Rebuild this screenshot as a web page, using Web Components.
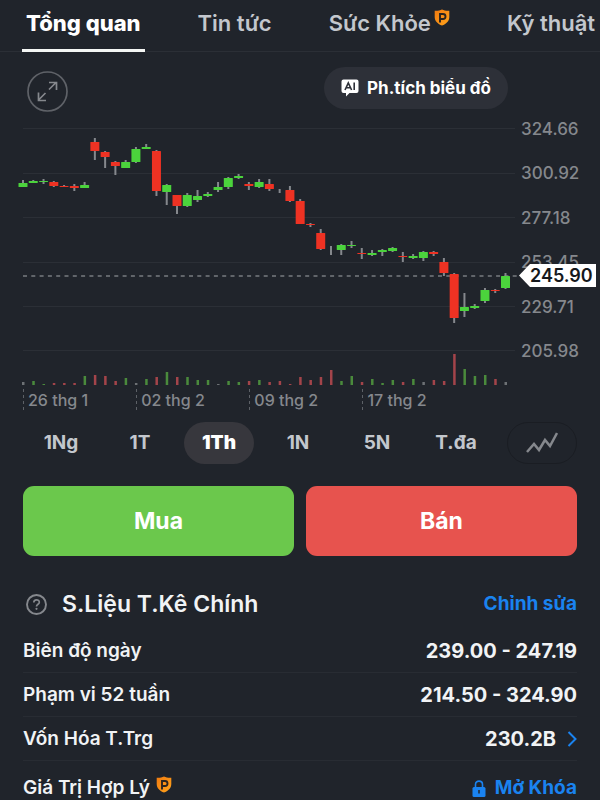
<!DOCTYPE html>
<html lang="vi">
<head>
<meta charset="utf-8">
<meta name="viewport" content="width=device-width, initial-scale=1">
<title>Tổng quan</title>
<style>
    :root {
        --bg: #20242b;
        --line: #2b2f36;
        --muted: #85888d;
        --soft: #c3c7cd;
        --text: #f1f3f5;
        --blue: #1a83f0;
        --up: #4bd33c;
        --down: #ee3223;
        --gutter: 23px;
    }
    body {
        margin: 0;
        background: var(--bg);
        color: var(--text);
        font-family: Inter, "Liberation Sans", sans-serif;
        overflow-x: hidden;
    }
</style>
</head>
<body>
<stock-tabs>
    <stock-tab active>Tổng quan</stock-tab>
    <stock-tab>Tin tức</stock-tab>
    <stock-tab>Sức Khỏe<pro-badge></pro-badge></stock-tab>
    <stock-tab>Kỹ thuật</stock-tab>
</stock-tabs>
<main>
    <chart-toolbar>Ph.tích biểu đồ</chart-toolbar>
    <price-chart></price-chart>
    <range-picker></range-picker>
    <trade-actions>
        <trade-button kind="buy">Mua</trade-button>
        <trade-button kind="sell">Bán</trade-button>
    </trade-actions>
    <key-stats>
        <span slot="title">S.Liệu T.Kê Chính</span>
        <span slot="action">Chỉnh sửa</span>
        <stat-row label="Biên độ ngày">239.00 - 247.19</stat-row>
        <stat-row label="Phạm vi 52 tuần">214.50 - 324.90</stat-row>
        <stat-row label="Vốn Hóa T.Trg" more>230.2B</stat-row>
        <stat-row label="Giá Trị Hợp Lý" locked>Mở Khóa</stat-row>
    </key-stats>
</main>

<script>
const BASE = `
    :host, * { box-sizing: border-box; }
    button { font: inherit; color: inherit; background: none; border: 0; padding: 0; cursor: pointer; }
    a { color: inherit; text-decoration: none; }
    svg { display: block; }
`;

class BaseElement extends HTMLElement {
    constructor() {
        super();
        this.attachShadow({ mode: 'open' });
    }

    connectedCallback() {
        this.shadowRoot.innerHTML = `<style>${BASE}${this.styles()}</style>${this.render()}`;
    }
}

// Orange shield shown next to paid features
class ProBadge extends BaseElement {
    styles() {
        return `:host { display: inline-block; flex: none; width: 16px; height: 17px; }`;
    }

    render() {
        return `
            <svg width="16" height="17" viewBox="0 0 16 17" aria-hidden="true">
                <defs><linearGradient id="g" x1="0" y1="0" x2="1" y2="1">
                    <stop offset="0" stop-color="#f07a10"/><stop offset="1" stop-color="#ffa41c"/>
                </linearGradient></defs>
                <path d="M8 0.5C10 1.6 12.8 2 15.3 1.8V8C15.3 12.2 12 15 8 16.6C4 15 0.7 12.2 0.7 8V1.8C3.2 2 6 1.6 8 0.5Z" fill="url(#g)"/>
                <path d="M6 13.5V5H9A2.5 2.5 0 0 1 9 10H6" fill="none" stroke="#2a2420" stroke-width="1.9"/>
            </svg>`;
    }
}
customElements.define('pro-badge', ProBadge);

class StockTabs extends BaseElement {
    styles() {
        return `
            :host { display: block; overflow: hidden; }
            nav { display: flex; gap: 49px; height: 52px; padding: 0 22px; border-bottom: 1px solid var(--line); white-space: nowrap; }
        `;
    }

    render() {
        return `<nav><slot></slot></nav>`;
    }
}
customElements.define('stock-tabs', StockTabs);

class StockTab extends BaseElement {
    styles() {
        return `
            :host { display: block; flex: none; }
            a { display: flex; gap: 3px; height: 52px; padding: 9px 4px 0; font-size: 22px; line-height: 28px; font-weight: 600; color: var(--soft); }
            :host([active]) a { color: #fff; font-weight: 800; border-bottom: 3px solid #f4f6f4; }
        `;
    }

    render() {
        return `<a href="#"><slot></slot></a>`;
    }
}
customElements.define('stock-tab', StockTab);

class ChartToolbar extends BaseElement {
    styles() {
        return `
            :host { display: flex; align-items: flex-start; justify-content: space-between; padding: 15px 92px 7px 27px; }
            .expand { margin-top: 4px; }
            .analyse { display: flex; align-items: center; justify-content: center; gap: 8px; height: 42px; padding: 0 17px; border-radius: 21px; background: #2d3038; font-size: 17px; line-height: 24px; font-weight: 700; color: #fff; }
        `;
    }

    render() {
        return `
            <button class="expand" aria-label="Mở rộng">
                <svg width="41" height="41" viewBox="0 0 41 41" fill="none">
                    <circle cx="20.5" cy="20.5" r="19.5" stroke="#5f6268" stroke-width="1.7"/>
                    <path d="M22 18.5L29 11.5M22 11.5H29.5V19M18.5 22L11.5 29M11.5 21.5V29.5H19" stroke="#85888d" stroke-width="1.7"/>
                </svg>
            </button>
            <button class="analyse">
                <svg width="18" height="18" viewBox="0 0 18 18" aria-hidden="true">
                    <path d="M2.5 0.5H15.5Q17.5 0.5 17.5 2.5V12Q17.5 14 15.5 14H8.5L5 17.5V14H2.5Q0.5 14 0.5 12V2.5Q0.5 0.5 2.5 0.5Z" fill="#fff"/>
                    <path d="M4 11L7.3 3.8L10.6 11M5.2 8.8H9.4M13.2 3.5V11" fill="none" stroke="#2d3038" stroke-width="1.6"/>
                </svg>
                <slot></slot>
            </button>`;
    }
}
customElements.define('chart-toolbar', ChartToolbar);

// [body top, body bottom, wick top, wick bottom, direction, volume]
const CANDLES = [
    [64, 68, 61, 68, 'u', 3], [62, 64, 61, 64, 'u', 4], [62, 63, 60, 65, 'u', 1], [63, 67, 62, 68, 'd', 2],
    [67, 68, 66, 68, 'd', 2], [67, 69, 65, 72, 'd', 2], [66, 69, 63, 69, 'u', 9], [23, 32, 19, 41, 'd', 10],
    [33, 38, 32, 49, 'd', 9], [43, 47, 42, 56, 'd', 4], [43, 49, 41, 49, 'u', 7], [30, 43, 28, 44, 'u', 2],
    [28, 30, 25, 30, 'u', 6], [32, 72, 31, 77, 'd', 8], [66, 73, 65, 86, 'u', 13], [76, 87, 76, 95, 'd', 8],
    [76, 87, 74, 88, 'u', 8], [77, 81, 71, 83, 'u', 5], [75, 77, 73, 78, 'u', 5], [68, 71, 63, 73, 'u', 1],
    [59, 68, 58, 70, 'u', 4], [57, 59, 55, 60, 'u', 3], [65, 67, 63, 71, 'd', 4], [63, 68, 60, 69, 'u', 5],
    [65, 70, 60, 72, 'd', 3], [70, 71, 70, 74, 'n', 4], [71, 82, 67, 83, 'd', 1], [82, 105, 80, 105, 'd', 8],
    [105, 106, 104, 108, 'd', 5], [114, 130, 110, 131, 'd', 8], [127, 127, 127, 136, 'n', 15], [126, 131, 125, 136, 'u', 4],
    [126, 127, 122, 129, 'u', 9], [134, 135, 129, 140, 'd', 3], [134, 136, 131, 137, 'u', 6], [131, 133, 130, 137, 'u', 2],
    [129, 132, 128, 133, 'u', 5], [137, 138, 133, 143, 'd', 3], [137, 139, 135, 140, 'u', 6], [133, 139, 132, 142, 'u', 3],
    [133, 135, 132, 137, 'd', 5], [143, 154, 139, 157, 'd', 4], [155, 199, 154, 204, 'd', 31], [188, 192, 174, 198, 'u', 16],
    [187, 189, 185, 190, 'u', 9], [171, 182, 169, 184, 'u', 10], [171, 172, 170, 174, 'd', 6], [157, 169, 154, 170, 'u', 3]
];
// volume bars without a trend colour
const FLAT_VOLUME = [0, 11, 19, 39, 47];

class PriceChart extends BaseElement {
    styles() {
        return `
            :host { display: grid; grid-template-columns: 1fr 81px; padding: 0 4px 0 23px; }
            .plot { width: 100%; height: 267px; overflow: visible; }
            .grid { stroke: var(--line); }
            .wick { stroke: #85888d; stroke-width: 2; }
            .u { fill: var(--up); } .d { fill: var(--down); } .n { fill: #85888d; }
            .vu { fill: #4a8a3c; } .vd { fill: #a3444a; } .vn { fill: #6d7175; }
            .axis { position: relative; display: flex; flex-direction: column; justify-content: space-between; height: 242px; padding-left: 6px; font-size: 17px; line-height: 20px; font-weight: 500; color: var(--muted); }
            .price { position: absolute; left: 4px; right: 0; top: 145px; height: 23px; padding-left: 11px; background: #fff; color: #15181c; font-size: 18px; line-height: 23px; font-weight: 600; clip-path: polygon(0 50%, 11px 0, 100% 0, 100% 100%, 11px 100%); }
            .dates { display: grid; grid-template-columns: repeat(4, 23%); height: 24px; font-size: 16px; line-height: 28px; font-weight: 500; color: var(--muted); white-space: nowrap; }
            .dates span { padding-left: 5px; background: repeating-linear-gradient(#5d6167 0 3px, transparent 3px 6px) 0 3px / 1px 21px no-repeat; }
        `;
    }

    render() {
        const step = 482.5 / (CANDLES.length - 1);
        const grid = [9, 54, 98, 143, 187, 231].map(y => `<line class="grid" x1="0" x2="492" y1="${y}.5" y2="${y}.5"/>`).join('');
        const bars = CANDLES.map(([top, bottom, high, low, dir, volume], i) => {
            const x = i * step;
            const tone = FLAT_VOLUME.includes(i) ? 'n' : dir === 'n' ? 'd' : dir;
            const body = dir === 'n' ? '' : `<rect class="${dir}" x="${x - 4.5}" y="${top}" width="9" height="${bottom - top}" rx="0.5"/>`;
            return `
                <line class="wick" x1="${x}" x2="${x}" y1="${high}" y2="${low}"/>
                ${body}
                <rect class="v${tone}" x="${x - 1}" y="${266 - volume}" width="2.5" height="${volume}"/>`;
        }).join('');

        return `
            <svg class="plot" viewBox="0 0 492 267" preserveAspectRatio="none" aria-hidden="true">
                ${grid}
                <line x1="0" x2="496" y1="157" y2="157" stroke="#777b80" stroke-width="1.5" stroke-dasharray="4 4.3"/>
                ${bars}
            </svg>
            <div class="axis">
                <span>324.66</span><span>300.92</span><span>277.18</span>
                <span>253.45</span><span>229.71</span><span>205.98</span>
                <strong class="price">245.90</strong>
            </div>
            <div class="dates">
                <span>26 thg 1</span><span>02 thg 2</span><span>09 thg 2</span><span>17 thg 2</span>
            </div>`;
    }
}
customElements.define('price-chart', PriceChart);

class RangePicker extends BaseElement {
    styles() {
        return `
            :host { display: flex; gap: 9px; padding: 12px 23px 22px 26px; }
            button { width: 70px; height: 42px; border-radius: 21px; font-size: 19px; line-height: 24px; font-weight: 700; color: var(--soft); }
            .on { background: #37373d; color: #fff; font-weight: 900; }
            .type { display: flex; align-items: center; justify-content: center; margin-left: auto; border: 1px solid #1a1d23; }
        `;
    }

    render() {
        const ranges = ['1Ng', '1T', '1Th', '1N', '5N', 'T.đa'];
        return ranges.map(r => `<button class="${r === '1Th' ? 'on' : ''}">${r}</button>`).join('') + `
            <button class="type" aria-label="Loại biểu đồ">
                <svg width="32" height="22" viewBox="0 0 32 22" fill="none">
                    <path d="M1 20L8 12L13 18L19 8L24 14L31 1" stroke="#85888d" stroke-width="2.5"/>
                </svg>
            </button>`;
    }

    connectedCallback() {
        super.connectedCallback();
        const buttons = this.shadowRoot.querySelectorAll('button:not(.type)');
        buttons.forEach(b => b.addEventListener('click', () => {
            buttons.forEach(o => o.classList.toggle('on', o === b));
        }));
    }
}
customElements.define('range-picker', RangePicker);

class TradeActions extends BaseElement {
    styles() {
        return `:host { display: grid; grid-template-columns: 1fr 1fr; gap: 12px; padding: 0 var(--gutter); }`;
    }

    render() {
        return `<slot></slot>`;
    }
}
customElements.define('trade-actions', TradeActions);

class TradeButton extends BaseElement {
    styles() {
        return `
            :host { display: block; }
            button { width: 100%; height: 70px; border-radius: 11px; background: #6bc84c; font-size: 23px; line-height: 28px; font-weight: 700; color: #fff; }
            :host([kind="sell"]) button { background: #e7534e; }
        `;
    }

    render() {
        return `<button><slot></slot></button>`;
    }
}
customElements.define('trade-button', TradeButton);

class KeyStats extends BaseElement {
    styles() {
        return `
            :host { display: block; padding: 32px var(--gutter) 0; }
            header { display: flex; align-items: center; height: 32px; margin-bottom: 9px; }
            header svg { margin: 0 15px 0 3px; }
            h2 { flex: 1; margin: 0; font-size: 23px; line-height: 32px; font-weight: 600; }
            a { font-size: 19px; line-height: 32px; font-weight: 700; color: var(--blue); }
        `;
    }

    render() {
        return `
            <header>
                <svg width="21" height="21" viewBox="0 0 21 21" fill="none" aria-hidden="true">
                    <circle cx="10.5" cy="10.5" r="9.5" stroke="#85888d" stroke-width="1.9"/>
                    <path d="M7.8 8.5C7.8 5 13.3 5 13.3 8.2C13.3 10.3 10.5 10.2 10.5 12.6" stroke="#85888d" stroke-width="1.7"/>
                    <circle cx="10.5" cy="14.8" r="1.1" fill="#85888d"/>
                </svg>
                <h2><slot name="title"></slot></h2>
                <a href="#"><slot name="action"></slot></a>
            </header>
            <slot></slot>`;
    }
}
customElements.define('key-stats', KeyStats);

class StatRow extends BaseElement {
    styles() {
        return `
            :host { display: flex; justify-content: space-between; align-items: center; height: 44px; border-bottom: 1px solid #282c33; font-size: 19px; line-height: 24px; font-weight: 600; }
            :host([locked]) { height: 39px; padding-top: 15px; border: 0; }
            .label, .value { display: flex; align-items: center; gap: 6px; }
            .label pro-badge { align-self: flex-start; }
            .value { font-size: 20px; font-weight: 700; }
            a.value { gap: 11px; }
            :host([locked]) .value { gap: 9px; font-size: 19px; color: var(--blue); }
        `;
    }

    render() {
        const label = this.getAttribute('label');
        if (this.hasAttribute('locked')) {
            return `
                <span class="label">${label}<pro-badge></pro-badge></span>
                <a class="value" href="#">
                    <svg width="14" height="17" viewBox="0 0 14 17" fill="none" aria-hidden="true">
                        <path d="M3.5 8V4.5C3.5 0 10.5 0 10.5 4.5V8" stroke="#1a83f0" stroke-width="1.6"/>
                        <rect x="0.5" y="7" width="13" height="10" rx="1.5" fill="#1a83f0"/>
                        <path d="M7 10V13.5" stroke="#20242b" stroke-width="1.5"/>
                    </svg>
                    <slot></slot>
                </a>`;
        }
        if (this.hasAttribute('more')) {
            return `
                <span class="label">${label}</span>
                <a class="value" href="#">
                    <slot></slot>
                    <svg width="10" height="16" viewBox="0 0 10 16" fill="none" aria-hidden="true">
                        <path d="M1.5 1L8.5 8L1.5 15" stroke="#1a83f0" stroke-width="2"/>
                    </svg>
                </a>`;
        }
        return `<span class="label">${label}</span><span class="value"><slot></slot></span>`;
    }
}
customElements.define('stat-row', StatRow);
</script>
</body>
</html>
